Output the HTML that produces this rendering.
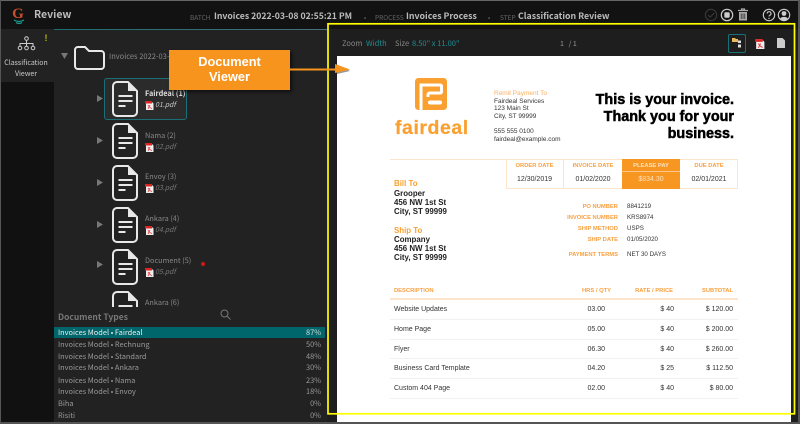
<!DOCTYPE html>
<html><head><meta charset="utf-8">
<style>
html,body{margin:0;padding:0;background:#222}
#p{position:relative;width:800px;height:424px;overflow:hidden;background:#222;font-family:"Noto Sans CJK JP","Liberation Sans",sans-serif;filter:blur(.3px)}
.b{position:absolute}
.t{position:absolute;white-space:nowrap;line-height:12px;height:12px}
.r{text-align:right}
.c{text-align:center}
.h{font-size:8.8px;font-weight:700;color:#bbb;top:9px}
.l{font-size:6.5px;color:#666;top:10px}
.dn{font-size:7.3px;color:#aaa;left:145px}
.pn{font-size:7px;color:#777;left:155px;font-style:italic}
.row{left:58px;font-size:7.4px;color:#999}
.pc{left:280px;width:41px;text-align:right;font-size:7.4px;color:#999}
.o{color:#f9a040}
.hd{font-family:"Liberation Sans",sans-serif;font-weight:700;font-size:14.4px;color:#000;left:560px;width:174px;text-align:right;-webkit-text-stroke:.5px #000;line-height:17px;height:17px}
.s{font-family:"Liberation Sans",sans-serif;font-size:6.5px;color:#333}
.bb{font-family:"Liberation Sans",sans-serif;font-size:7.9px;font-weight:700;color:#222;left:394px}
.oh{font-family:"Liberation Sans",sans-serif;font-size:5.8px;font-weight:700;color:#f9a040}
.v{font-family:"Liberation Sans",sans-serif;font-size:7px;color:#333}
.m{font-family:"Liberation Sans",sans-serif;font-size:6.2px;color:#333;left:627px}
.h,.l,.dn,.pn,.row,.pc,.s,.m,.v,.oh,.u{transform:translateY(1px)}
.sep{position:absolute;left:390px;width:348px;height:1px;background:#f1f1f1}
</style></head>
<body><div id="p">
<!-- header -->
<div class="b" style="left:0;top:0;width:800px;height:29px;background:#121212"></div>
<!-- sidebar -->
<div class="b" style="left:0;top:29px;width:54px;height:395px;background:#111"></div>
<div class="b" style="left:0;top:29px;width:54px;height:53px;background:#222"></div>
<div class="b" style="left:54px;top:28.5px;width:745px;height:1px;background:linear-gradient(90deg,#1d6d73,#4a6f7c 40%,#7a4f96 100%)"></div>
<!-- logo -->
<div class="t" style="left:10px;top:7px;width:16px;text-align:center;font-family:'Liberation Serif',serif;font-size:15px;font-weight:700;color:#c8502a;line-height:14px;height:14px">G</div>
<svg class="b" style="left:12px;top:19px" width="14" height="6" viewBox="0 0 14 6"><path d="M2 1q5 3 10 0M4 3.5q3 2 6 0" stroke="#1c9a8e" stroke-width="1.2" fill="none"/></svg>
<div class="t u" style="left:34px;top:8px;font-size:10.5px;font-weight:700;color:#bbb">Review</div>
<div class="t l" style="left:190px">BATCH</div>
<div class="t h" style="left:214px;font-size:8.7px">Invoices 2022-03-08 02:55:21 PM</div>
<div class="t l" style="left:364px">•</div>
<div class="t l" style="left:375px">PROCESS</div>
<div class="t h" style="left:406px">Invoices Process</div>
<div class="t l" style="left:488px">•</div>
<div class="t l" style="left:500px">STEP</div>
<div class="t h" style="left:518px">Classification Review</div>
<svg class="b" style="left:700px;top:3px" width="96" height="24" viewBox="700 3 96 24" fill="none">
<circle cx="711" cy="15" r="5.7" stroke="#3c3c3c" stroke-width="1"/><path d="M708 15l2.2 2.2 4-4.2" stroke="#3c3c3c"/>
<circle cx="727" cy="15" r="5.7" stroke="#ccc" stroke-width="1.2"/><rect x="724.3" y="12.3" width="5.4" height="5.4" rx="1.2" fill="#ccc"/>
<path d="M738 10.500h10M741.500 10v-1h3v1" stroke="#aaa" stroke-width="1.2"/><path d="M739 12h8v8.500h-8z" fill="#aaa"/><path d="M741.200 13.500v5.500M743 13.500v5.500M744.800 13.500v5.500" stroke="#222" stroke-width=".7"/>
<circle cx="769" cy="15" r="5.7" stroke="#ccc" stroke-width="1.1"/><path d="M767.200 13.500a1.900 1.900 0 1 1 2.600 1.800c-.6.3-.8.6-.8 1.200" stroke="#ccc" stroke-width="1.1"/><circle cx="769" cy="18.400" r=".7" fill="#ccc"/>
<circle cx="784" cy="15" r="5.7" stroke="#ccc" stroke-width="1.1"/><circle cx="784" cy="13.500" r="2.400" fill="#ccc"/><path d="M779.800 19a4.600 3.600 0 0 1 8.400 0 5.700 5.700 0 0 1-8.400 0z" fill="#ccc"/>
</svg>
<!-- sidebar contents -->
<svg class="b" style="left:17px;top:36px" width="19" height="15" viewBox="0 0 19 15" fill="none" stroke="#ccc" stroke-width="1"><circle cx="9.5" cy="2.5" r="1.8"/><path d="M9.5 4.500v3M3 10V7.500h13V10M9.500 7.500V10"/><circle cx="3" cy="12" r="1.8"/><circle cx="9.500" cy="12" r="1.8"/><circle cx="16" cy="12" r="1.8"/></svg>
<div class="t" style="left:44.500px;top:32px;font-family:'Liberation Sans',sans-serif;font-size:9px;font-weight:700;color:#b5b500">!</div>
<div class="t c u" style="left:0;width:52px;top:56px;font-size:7px;color:#ccc">Classification</div>
<div class="t c u" style="left:0;width:52px;top:67px;font-size:7px;color:#ccc">Viewer</div>
<!-- tree -->
<svg class="b" style="left:60px;top:52px" width="9" height="8"><path d="M1 1h7l-3.500 6z" fill="#777"/></svg>
<svg class="b" style="left:73px;top:45px" width="33" height="26" fill="none"><path d="M2 5a3 3 0 0 1 3-3h7l4 4h12a3 3 0 0 1 3 3v12a3 3 0 0 1-3 3H5a3 3 0 0 1-3-3z" stroke="#e8e8e8" stroke-width="2"/></svg>
<div class="t u" style="left:109px;top:50px;font-size:7.500px;color:#888">Invoices 2022-03-08</div>

<div class="b" style="left:104px;top:78px;width:81px;height:40px;border:1px solid #1a7078;border-radius:3px;background:#2b2b2b"></div>
<svg width="0" height="0" style="position:absolute"><defs>
<symbol id="doc" viewBox="0 0 26 36"><path d="M5 1h11l9 9v21a4 4 0 0 1-4 4H5a4 4 0 0 1-4-4V5a4 4 0 0 1 4-4z" fill="none" stroke="#e8e8e8" stroke-width="2"/><path d="M16 1l9 9h-9z" fill="#e8e8e8"/><path d="M6.500 15h14M6.500 20h14M6.500 25h7" stroke="#e8e8e8" stroke-width="2"/></symbol>
<symbol id="pdf" viewBox="0 0 9 10"><path d="M1 1h5l2.500 2.500V10H1z" fill="#eee"/><path d="M0 1h7v2.500H0z" fill="#d22"/><path d="M3 5c1 2 2 3 4 3.500M5 5L3 9" stroke="#d33" stroke-width=".8" fill="none"/></symbol>
<symbol id="tri" viewBox="0 0 6 7"><path d="M0 0l6 3.500L0 7z" fill="#777"/></symbol>
</defs></svg>

<svg class="b" style="left:112px;top:81px" width="26" height="36"><use href="#doc"/></svg>
<svg class="b" style="left:112px;top:123px" width="26" height="36"><use href="#doc"/></svg>
<svg class="b" style="left:112px;top:165px" width="26" height="36"><use href="#doc"/></svg>
<svg class="b" style="left:112px;top:207px" width="26" height="36"><use href="#doc"/></svg>
<svg class="b" style="left:112px;top:249px" width="26" height="36"><use href="#doc"/></svg>
<svg class="b" style="left:112px;top:291px" width="26" height="36"><use href="#doc"/></svg>
<svg class="b" style="left:96.500px;top:95px" width="6" height="7"><use href="#tri"/></svg>
<svg class="b" style="left:96.500px;top:137px" width="6" height="7"><use href="#tri"/></svg>
<svg class="b" style="left:96.500px;top:179px" width="6" height="7"><use href="#tri"/></svg>
<svg class="b" style="left:96.500px;top:221px" width="6" height="7"><use href="#tri"/></svg>
<svg class="b" style="left:96.500px;top:261px" width="6" height="7"><use href="#tri"/></svg>
<div class="t dn" style="top:87px;color:#ddd;font-weight:700">Fairdeal (1)</div>
<div class="t dn" style="top:129px;color:#888">Nama (2)</div>
<div class="t dn" style="top:170px;color:#888">Envoy (3)</div>
<div class="t dn" style="top:212px;color:#888">Ankara (4)</div>
<div class="t dn" style="top:254px;color:#888">Document (5)</div>
<div class="t dn" style="top:296px;color:#888">Ankara (6)</div>
<svg class="b" style="left:145px;top:100px" width="9" height="10"><use href="#pdf"/></svg>
<svg class="b" style="left:145px;top:142px" width="9" height="10"><use href="#pdf"/></svg>
<svg class="b" style="left:145px;top:183px" width="9" height="10"><use href="#pdf"/></svg>
<svg class="b" style="left:145px;top:225px" width="9" height="10"><use href="#pdf"/></svg>
<svg class="b" style="left:145px;top:267px" width="9" height="10"><use href="#pdf"/></svg>
<div class="t pn" style="top:98px;color:#ccc">01.pdf</div>
<div class="t pn" style="top:140px">02.pdf</div>
<div class="t pn" style="top:181px">03.pdf</div>
<div class="t pn" style="top:223px">04.pdf</div>
<div class="t pn" style="top:265px">05.pdf</div>
<div class="b" style="left:201px;top:262px;width:4px;height:4px;border-radius:50%;background:#d01818"></div>

<!-- document types -->
<div class="b" style="left:54px;top:307px;width:272px;height:117px;background:#222"></div>
<div class="t" style="left:58px;top:311px;font-size:8.500px;font-weight:700;color:#777">Document Types</div>
<svg class="b" style="left:220px;top:309px" width="11" height="11" fill="none" stroke="#777"><circle cx="4.500" cy="4.500" r="3.500"/><path d="M7 7l3.500 3.500"/></svg>
<div class="b" style="left:54px;top:327px;width:271px;height:11px;background:#00666b"></div>
<div class="t row" style="top:326px;color:#eee">Invoices Model • Fairdeal</div><div class="t pc" style="top:326px;color:#ddd">87%</div>
<div class="t row" style="top:338px">Invoices Model • Rechnung</div><div class="t pc" style="top:338px">50%</div>
<div class="t row" style="top:350px">Invoices Model • Standard</div><div class="t pc" style="top:350px">48%</div>
<div class="t row" style="top:361px">Invoices Model • Ankara</div><div class="t pc" style="top:361px">30%</div>
<div class="t row" style="top:374px">Invoices Model • Nama</div><div class="t pc" style="top:374px">23%</div>
<div class="t row" style="top:385px">Invoices Model • Envoy</div><div class="t pc" style="top:385px">18%</div>
<div class="t row" style="top:397px">Biha</div><div class="t pc" style="top:397px">0%</div>
<div class="t row" style="top:409px">Risiti</div><div class="t pc" style="top:409px">0%</div>

<!-- viewer -->
<div class="b" style="left:327px;top:29px;width:472px;height:395px;background:#1e1e1e"></div>
<div class="t u" style="left:342px;top:37px;font-size:7.500px;color:#888">Zoom</div>
<div class="t u" style="left:366px;top:37px;font-size:7.500px;color:#1d8f96">Width</div>
<div class="t u" style="left:395px;top:37px;font-size:7.500px;color:#888">Size</div>
<div class="t u" style="left:412px;top:37px;font-size:7.500px;color:#1d8f96">8.50" x 11.00"</div>
<div class="t u" style="left:560px;top:37px;font-size:7px;color:#999">1&nbsp;&nbsp; / 1</div>
<div class="b" style="left:728px;top:34px;width:16px;height:17px;border:1px solid #1a7078;border-radius:2px"></div>
<svg class="b" style="left:732px;top:38px" width="10" height="10"><path d="M0 0h3l1 1h2v3H0z" fill="#e8b85a"/><rect x="6" y="2.500" width="3" height="2.500" fill="#ddd"/><rect x="6" y="6.500" width="3" height="3" fill="#ddd"/></svg>
<svg class="b" style="left:755px;top:38px" width="10" height="11"><use href="#pdf"/></svg>
<svg class="b" style="left:777px;top:38px" width="8" height="10"><path d="M0 0h5.500L8 2.500V10H0z" fill="#ccc"/></svg>

<!-- page -->
<div class="b" style="left:337px;top:56px;width:454px;height:368px;background:#fff"></div>

<!-- invoice logo -->
<svg class="b" style="left:415px;top:78px" width="32" height="32" viewBox="0 0 32 32"><rect width="32" height="32" rx="3.500" fill="#f9a030"/><path d="M6 32V7H25Q26.500 7 26.500 8.500V13.500Q26.500 15 25 15H15Q13 15 13 17V19" fill="none" stroke="#fff" stroke-width="3"/><rect x="13" y="22.500" width="14" height="4" rx="2" fill="#fff"/></svg>
<div class="t" style="left:395px;top:119px;height:18px;line-height:18px;font-family:'Liberation Sans',sans-serif;font-weight:700;font-size:19.500px;color:#f9a030;letter-spacing:.55px;-webkit-text-stroke:.2px #f9a030">fairdeal</div>
<div class="t s o" style="left:494px;top:87px;color:#f9b060">Remit Payment To</div>
<div class="t s" style="left:494px;top:95px">Fairdeal Services</div>
<div class="t s" style="left:494px;top:102px">123 Main St</div>
<div class="t s" style="left:494px;top:110px">City, ST 99999</div>
<div class="t s" style="left:494px;top:125px">555 555 0100</div>
<div class="t s" style="left:494px;top:133px">fairdeal@example.com</div>
<div class="t hd" style="top:92px">This is your invoice.</div>
<div class="t hd" style="top:109px">Thank you for your</div>
<div class="t hd" style="top:126px">business.</div>

<!-- dates -->
<div class="b" style="left:390px;top:158.500px;width:348px;height:1px;background:#fde5cc"></div>
<div class="b" style="left:506px;top:158.500px;width:232px;height:30px;border:1px solid #fde5cc;box-sizing:border-box"></div>
<div class="b" style="left:563px;top:159px;width:1px;height:29px;background:#fde5cc"></div>
<div class="b" style="left:622px;top:159px;width:58px;height:30px;background:#f79620"></div>
<div class="b" style="left:622px;top:170.500px;width:58px;height:.7px;background:#fcc78a"></div>
<div class="t oh c" style="left:506px;width:57px;top:158.500px">ORDER DATE</div>
<div class="t oh c" style="left:564px;width:58px;top:158.500px">INVOICE DATE</div>
<div class="t oh c" style="left:622px;width:58px;top:158.500px;color:#fde0c0">PLEASE PAY</div>
<div class="t oh c" style="left:680px;width:58px;top:158.500px">DUE DATE</div>
<div class="t v c" style="left:506px;width:57px;top:173px">12/30/2019</div>
<div class="t v c" style="left:564px;width:58px;top:173px">01/02/2020</div>
<div class="t v c" style="left:622px;width:58px;top:173px;color:#fde0c0">$834.30</div>
<div class="t v c" style="left:680px;width:58px;top:173px">02/01/2021</div>

<!-- bill to -->
<div class="t bb o" style="top:178px;color:#f9a030">Bill To</div>
<div class="t bb" style="top:188px">Grooper</div>
<div class="t bb" style="top:197px">456 NW 1st St</div>
<div class="t bb" style="top:206px">City, ST 99999</div>
<div class="t bb o" style="top:225px;color:#f9a030">Ship To</div>
<div class="t bb" style="top:234px">Company</div>
<div class="t bb" style="top:243px">456 NW 1st St</div>
<div class="t bb" style="top:252px">City, ST 99999</div>

<!-- meta -->
<div class="t oh r" style="left:520px;width:98px;top:200px">PO NUMBER</div><div class="t m" style="top:200px">8841219</div>
<div class="t oh r" style="left:520px;width:98px;top:211px">INVOICE NUMBER</div><div class="t m" style="top:211px">KRS8974</div>
<div class="t oh r" style="left:520px;width:98px;top:222px">SHIP METHOD</div><div class="t m" style="top:222px">USPS</div>
<div class="t oh r" style="left:520px;width:98px;top:233px">SHIP DATE</div><div class="t m" style="top:233px">01/05/2020</div>
<div class="t oh r" style="left:520px;width:98px;top:248px">PAYMENT TERMS</div><div class="t m" style="top:248px">NET 30 DAYS</div>

<!-- table -->
<div class="t oh" style="left:394px;top:284px">DESCRIPTION</div>
<div class="t oh r" style="left:540px;width:71px;top:284px">HRS / QTY</div>
<div class="t oh r" style="left:610px;width:63px;top:284px">RATE / PRICE</div>
<div class="t oh r" style="left:670px;width:63px;top:284px">SUBTOTAL</div>
<div class="b" style="left:390px;top:298px;width:348px;height:1.500px;background:#fde5cc"></div>

<div class="t v" style="left:394px;top:303px">Website Updates</div><div class="t v r" style="left:560px;width:45px;top:303px">03.00</div><div class="t v r" style="left:630px;width:44px;top:303px">$ 40</div><div class="t v r" style="left:680px;width:53px;top:303px">$ 120.00</div>
<div class="sep" style="top:318.500px"></div>
<div class="t v" style="left:394px;top:323px">Home Page</div><div class="t v r" style="left:560px;width:45px;top:323px">05.00</div><div class="t v r" style="left:630px;width:44px;top:323px">$ 40</div><div class="t v r" style="left:680px;width:53px;top:323px">$ 200.00</div>
<div class="sep" style="top:338.500px"></div>
<div class="t v" style="left:394px;top:343px">Flyer</div><div class="t v r" style="left:560px;width:45px;top:343px">06.30</div><div class="t v r" style="left:630px;width:44px;top:343px">$ 40</div><div class="t v r" style="left:680px;width:53px;top:343px">$ 260.00</div>
<div class="sep" style="top:358px"></div>
<div class="t v" style="left:394px;top:362px">Business Card Template</div><div class="t v r" style="left:560px;width:45px;top:362px">04.20</div><div class="t v r" style="left:630px;width:44px;top:362px">$ 25</div><div class="t v r" style="left:680px;width:53px;top:362px">$ 112.50</div>
<div class="sep" style="top:378px"></div>
<div class="t v" style="left:394px;top:382px">Custom 404 Page</div><div class="t v r" style="left:560px;width:45px;top:382px">02.00</div><div class="t v r" style="left:630px;width:44px;top:382px">$ 40</div><div class="t v r" style="left:680px;width:53px;top:382px">$ 80.00</div>
<div class="sep" style="top:397.500px"></div>

<!-- yellow annotation -->
<svg class="b" style="left:0;top:0" width="800" height="424"><rect x="328" y="23.800" width="466.500" height="390" fill="none" stroke="#ffff00" stroke-width="1.700"/></svg>

<!-- orange callout -->
<div class="b" style="left:169px;top:50px;width:121px;height:40px;background:#f7941e;box-shadow:2px 2px 3px rgba(0,0,0,.55)"></div>
<div class="t c" style="left:169px;width:121px;top:54px;height:16px;line-height:16px;font-family:'Liberation Sans',sans-serif;font-weight:700;font-size:12.800px;color:#fff">Document</div>
<div class="t c" style="left:169px;width:121px;top:69px;height:16px;line-height:16px;font-family:'Liberation Sans',sans-serif;font-weight:700;font-size:12.800px;color:#fff">Viewer</div>
<svg class="b" style="left:289px;top:60px;overflow:visible" width="64" height="20"><path d="M48 4.500L61 11 48 14z" fill="#555" opacity=".6"/><path d="M0 9.500h48" stroke="#f7941e" stroke-width="2"/><path d="M46 4l15 5.500L46 13z" fill="#f7941e"/></svg>

<!-- frame -->
<div class="b" style="left:0;top:0;width:800px;height:1px;background:#666"></div>
<div class="b" style="left:0;top:422px;width:800px;height:2px;background:#555"></div>
<div class="b" style="left:0;top:0;width:1px;height:424px;background:#555"></div>
<div class="b" style="left:798px;top:0;width:2px;height:424px;background:#555"></div>
</div></body></html>
